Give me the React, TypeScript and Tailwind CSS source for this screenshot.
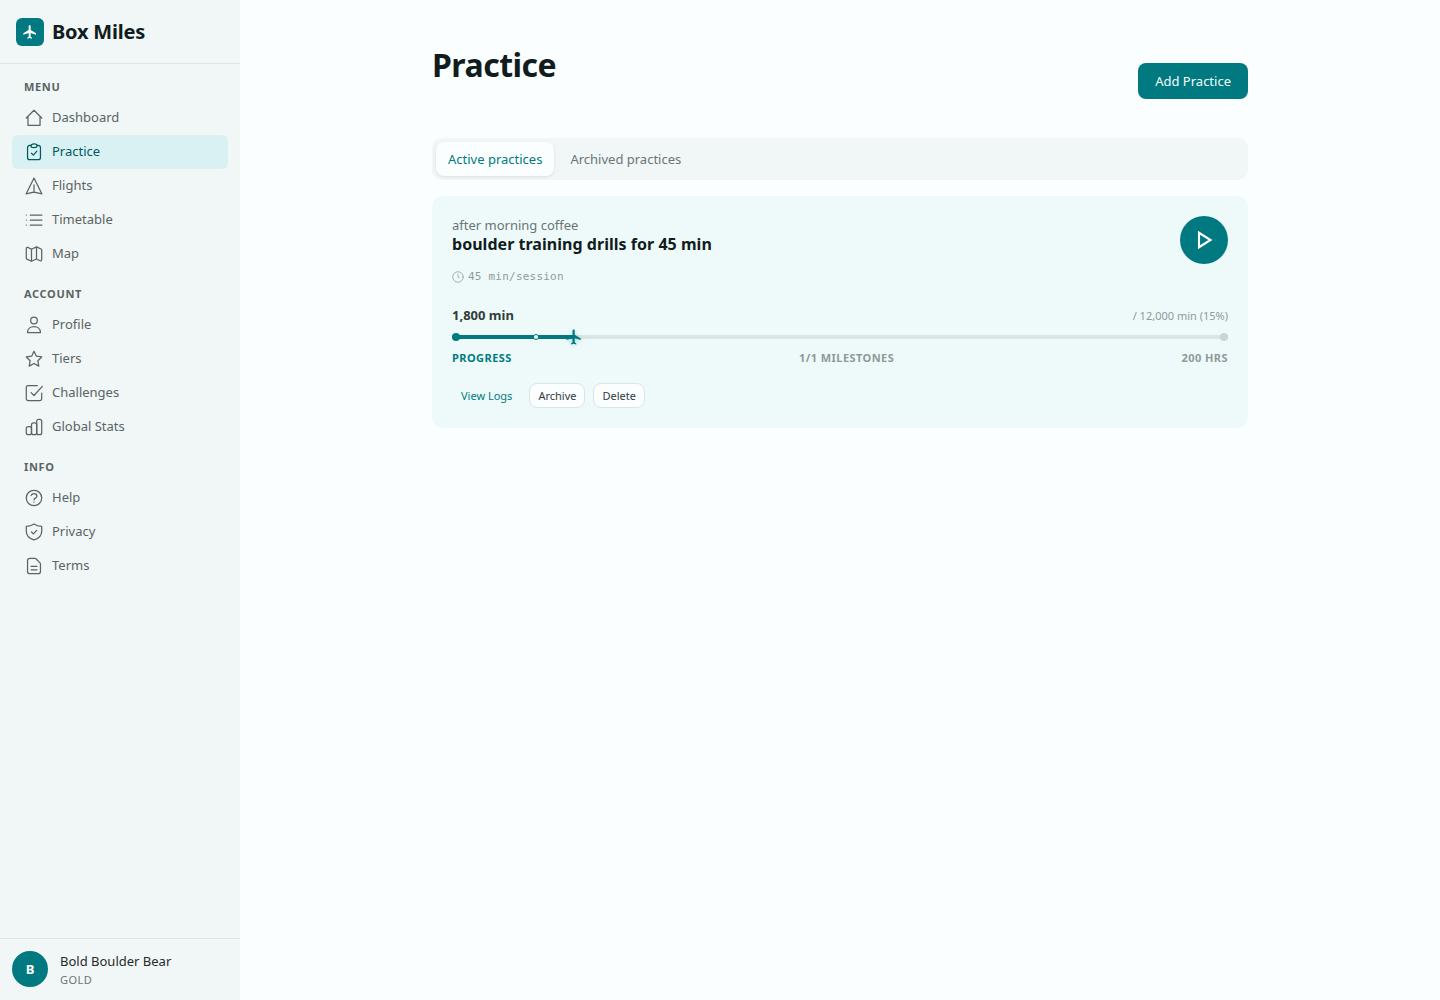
import type { ReactNode } from 'react'

interface NavItem {
  label: string
  icon: ReactNode
  active?: boolean
}

interface NavSection {
  title: string
  items: NavItem[]
}

const SECTIONS: NavSection[] = [
  {
    title: 'Menu',
    items: [
      { label: 'Dashboard', icon: <path d="M2.75 12L12 2.75 21.25 12M4.75 10.25v10.5h14.5v-10.5" /> },
      {
        label: 'Practice',
        active: true,
        icon: (
          <>
            <path d="M8.25 4H7a2.75 2.75 0 0 0-2.75 2.75V18.5A2.75 2.75 0 0 0 7 21.25h10a2.75 2.75 0 0 0 2.75-2.75V6.75A2.75 2.75 0 0 0 17 4h-1.25" />
            <ellipse cx="12" cy="4.5" rx="3.75" ry="2.25" />
            <path d="M9 13.5l2.25 2.25L15.5 11" />
          </>
        ),
      },
      { label: 'Flights', icon: <path d="M12 2.5L2.5 21.5l9.5-2.25 9.5 2.25L12 2.5zM12 19V10.5" /> },
      { label: 'Timetable', icon: <path d="M7.5 6h14M7.5 12h14M7.5 18h14M2.75 6h.01M2.75 12h.01M2.75 18h.01" /> },
      {
        label: 'Map',
        icon: (
          <path d="M9 6.25L4.6 4.1a1.3 1.3 0 0 0-1.85 1.2v11.6c0 .5.3.95.75 1.2L9 20.75l6-2.75 4.4 2.1a1.3 1.3 0 0 0 1.85-1.2V7.2c0-.5-.3-.95-.75-1.2L15 3.5 9 6.25zM9 6.25v14.5M15 3.5V18" />
        ),
      },
    ],
  },
  {
    title: 'Account',
    items: [
      {
        label: 'Profile',
        icon: (
          <>
            <circle cx="12" cy="6.5" r="4" />
            <path d="M4.25 21c0-4.25 3.25-7 7.75-7s7.75 2.75 7.75 7H4.25z" />
          </>
        ),
      },
      {
        label: 'Tiers',
        icon: <path d="M12 2.75l2.85 5.9 6.4.9-4.65 4.5 1.15 6.45L12 17.4l-5.75 3.1 1.15-6.45-4.65-4.5 6.4-.9L12 2.75z" />,
      },
      {
        label: 'Challenges',
        icon: <path d="M8.5 11.5l3.5 3.5L22 4M21.25 12v7a2 2 0 0 1-2 2h-14.5a2 2 0 0 1-2-2V5a2 2 0 0 1 2-2H16" />,
      },
      {
        label: 'Global Stats',
        icon: (
          <>
            <rect x="2.75" y="11.5" width="6.25" height="9.75" rx="2.5" />
            <rect x="9" y="7" width="6.25" height="14.25" rx="2.5" />
            <rect x="15.25" y="2.75" width="6" height="18.5" rx="2.5" />
          </>
        ),
      },
    ],
  },
  {
    title: 'Info',
    items: [
      {
        label: 'Help',
        icon: (
          <>
            <circle cx="12" cy="12" r="9.25" />
            <path d="M8.5 9c.7-1.6 2-2.25 3.5-2.25 2 0 3.5 1.25 3.5 3 0 2.5-3.5 2.25-3.5 4.5M12 17h.01" />
          </>
        ),
      },
      {
        label: 'Privacy',
        icon: (
          <>
            <path d="M12 2.5c-2.6 1.9-5.6 2.75-9.25 2.75v5.5C2.75 16.2 6.4 20 12 21.5c5.6-1.5 9.25-5.3 9.25-10.75v-5.5c-3.65 0-6.65-.85-9.25-2.75z" />
            <path d="M9 12l2.25 2.25L15.25 10" />
          </>
        ),
      },
      {
        label: 'Terms',
        icon: (
          <path d="M13 2.75H7A2.75 2.75 0 0 0 4.25 5.5v13A2.75 2.75 0 0 0 7 21.25h10a2.75 2.75 0 0 0 2.75-2.75V9.5c0-.5-.2-.95-.55-1.3l-4.9-4.9a1.85 1.85 0 0 0-1.3-.55zM8.5 12.5h7M8.5 16.5h7" />
        ),
      },
    ],
  },
]

function PlaneIcon({ className }: { className?: string }) {
  return (
    <svg viewBox="0 0 24 24" fill="currentColor" className={className}>
      <path d="M21 16v-2l-8-5V3.5c0-.83-.67-1.5-1.5-1.5S10 2.67 10 3.5V9l-8 5v2l8-2.5V19l-2 1.5V22l3.5-1 3.5 1v-1.5L13 19v-5.5l8 2.5z" />
    </svg>
  )
}

function Sidebar() {
  return (
    <aside className="flex w-60 shrink-0 flex-col bg-[#f1f6f6]">
      <div className="flex h-16 items-center gap-2 border-b border-[#dce4e4] px-4">
        <div className="flex size-7 items-center justify-center rounded-md bg-[#007a80] text-white">
          <PlaneIcon className="size-4" />
        </div>
        <span className="text-xl font-bold tracking-[-0.01em] text-[#111c1c]">Box Miles</span>
      </div>
      <nav className="flex-1 px-3">
        {SECTIONS.map(section => (
          <div key={section.title}>
            <div className="h-[37px] px-3 pt-[15px] text-[11px] leading-4 font-bold tracking-[0.06em] text-[#5a6464] uppercase">
              {section.title}
            </div>
            {section.items.map(item => (
              <a
                key={item.label}
                className={
                  item.active
                    ? 'flex h-[34px] items-center gap-2 rounded-md bg-[#d9f1f3] px-3 text-[13px] text-[#005a5f]'
                    : 'flex h-[34px] items-center gap-2 rounded-md px-3 text-[13px] text-[#5a6464]'
                }
              >
                <svg
                  viewBox="0 0 24 24"
                  fill="none"
                  stroke="currentColor"
                  strokeWidth={1.5}
                  strokeLinecap="round"
                  strokeLinejoin="round"
                  className="size-5"
                >
                  {item.icon}
                </svg>
                {item.label}
              </a>
            ))}
          </div>
        ))}
      </nav>
      <div className="flex h-[62px] items-start gap-3 border-t border-[#dce4e4] px-3 pt-3">
        <div className="flex size-9 items-center justify-center rounded-full bg-[#007a80] text-[13px] leading-5 font-bold text-white">
          B
        </div>
        <div>
          <div className="text-[13px] leading-5 text-[#1f2a2a]">Bold Boulder Bear</div>
          <div className="text-[11px] leading-[17px] tracking-[0.04em] text-[#6b7575]">GOLD</div>
        </div>
      </div>
    </aside>
  )
}

function ProgressTrack({ percent, milestone }: { percent: number; milestone: number }) {
  return (
    <div className="relative mt-2.5 h-1 rounded-full bg-[#dae6e6]">
      <div className="h-1 rounded-full bg-[#007a80]" style={{ width: `${percent}%` }} />
      <span className="absolute -top-0.5 left-0 size-2 rounded-full bg-[#007a80]" />
      <span className="absolute -top-0.5 right-0 size-2 rounded-full bg-[#cbd3d3]" />
      <span
        className="absolute -top-px size-1.5 -translate-x-1/2 rounded-full border border-[#007a80] bg-[#eefafa]"
        style={{ left: `${milestone}%` }}
      />
      <span
        className="absolute top-1/2 -translate-x-1/2 -translate-y-1/2 text-[#007a80] drop-shadow-[0_1px_2px_rgba(0,122,128,0.3)]"
        style={{ left: `${percent}%` }}
      >
        <PlaneIcon className="size-[18px]" />
      </span>
    </div>
  )
}

function PracticeCard() {
  return (
    <section className="mt-4 h-[232px] rounded-xl bg-[#eefafa] p-5">
      <div className="flex items-start justify-between">
        <div>
          <div className="text-[13px] leading-[19px] text-[#6b7575]">after morning coffee</div>
          <h2 className="text-base leading-[19px] font-bold tracking-[0.002em] text-[#111c1c]">
            boulder training drills for 45 min
          </h2>
          <div className="mt-[15px] flex items-center gap-1 font-['DejaVu_Sans_Mono',monospace] text-[11px] leading-4 tracking-[0.02em] text-[#8f9999]">
            <svg
              viewBox="0 0 24 24"
              fill="none"
              stroke="currentColor"
              strokeWidth={1.5}
              strokeLinecap="round"
              strokeLinejoin="round"
              className="size-3"
            >
              <circle cx="12" cy="12" r="10.5" />
              <path d="M12 6v6l3 1.5" />
            </svg>
            45 min/session
          </div>
        </div>
        <button className="flex size-12 items-center justify-center rounded-full bg-[#007a80] text-white">
          <svg viewBox="0 0 24 24" fill="none" stroke="currentColor" strokeWidth={2.1} className="size-6">
            <path d="M7 4.75v14.5L18.5 12 7 4.75z" />
          </svg>
        </button>
      </div>
      <div className="mt-5 flex h-5 items-baseline justify-between leading-5">
        <span className="text-[13px] font-bold text-[#323c3c]">1,800 min</span>
        <span className="text-[11px] text-[#8f9999]">/ 12,000 min (15%)</span>
      </div>
      <ProgressTrack percent={15.7} milestone={10.8} />
      <div className="mt-[11px] flex justify-between text-[11px] leading-4 font-bold tracking-[0.04em] text-[#8f9999]">
        <span className="text-[#007a80]">PROGRESS</span>
        <span>1/1 MILESTONES</span>
        <span>200 HRS</span>
      </div>
      <div className="mt-[17px] flex h-[25px] gap-2 text-[11px] text-[#323c3c]">
        <button className="border border-transparent px-2 pt-0.5 text-[#007a80]">View Logs</button>
        <button className="rounded-lg border border-[#dce4e4] bg-[#fbfefe] px-2 pt-0.5">Archive</button>
        <button className="rounded-lg border border-[#dce4e4] bg-[#fbfefe] px-2 pt-0.5">Delete</button>
      </div>
    </section>
  )
}

export default function App() {
  return (
    <div className="flex h-screen bg-[#fbfefe] font-['Noto_Sans',sans-serif]">
      <Sidebar />
      <main className="flex-1">
        <div className="mx-auto w-[816px] pt-[45px]">
          <header className="flex h-[54px] items-start justify-between">
            <h1 className="text-[32px] leading-10 font-bold tracking-[-0.016em] text-[#111c1c]">Practice</h1>
            <button className="h-9 self-end rounded-lg bg-[#007a80] px-[17px] pt-0.5 text-[13px] text-[#f4fdfd]">
              Add Practice
            </button>
          </header>
          <div className="mt-[39px] flex h-[42px] gap-1 rounded-[10px] bg-[#f1f6f6] p-1 text-[13px]">
            <button className="rounded-lg bg-[#fbfefe] px-3 pt-0.5 text-[#007a80] shadow-[0_1px_3px_rgba(0,40,40,0.1)]">
              Active practices
            </button>
            <button className="px-3 pt-0.5 text-[#6b7575]">Archived practices</button>
          </div>
          <PracticeCard />
        </div>
      </main>
    </div>
  )
}
